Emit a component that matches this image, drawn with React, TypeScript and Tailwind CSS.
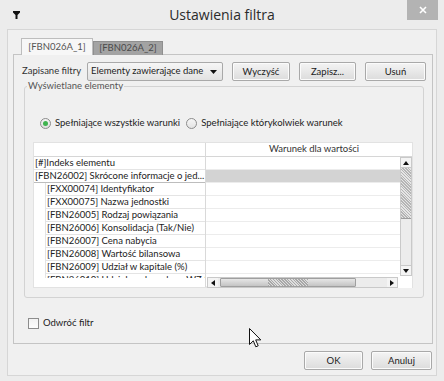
import React from "react";

const rows = [
  { t: "[#]Indeks elementu", i: 0 },
  { t: "[FBN26002] Skrócone informacje o jed...", i: 0, sel: true },
  { t: "[FXX00074] Identyfikator", i: 1 },
  { t: "[FXX00075] Nazwa jednostki", i: 1 },
  { t: "[FBN26005] Rodzaj powiązania", i: 1 },
  { t: "[FBN26006] Konsolidacja (Tak/Nie)", i: 1 },
  { t: "[FBN26007] Cena nabycia", i: 1 },
  { t: "[FBN26008] Wartość bilansowa", i: 1 },
  { t: "[FBN26009] Udział w kapitale (%)", i: 1 },
  { t: "[FBN26010] Udział w głosach na WZ (%)", i: 1 },
];

function Btn({ label, w }: { label: string; w: string }) {
  return (
    <button
      className={`${w} h-[19px] rounded-[2px] border border-[#a9a9a9] bg-gradient-to-b from-[#f4f4f4] to-[#dcdcdc] text-[#222] leading-[17px] shadow-[inset_0_0_0_1px_#fbfbfb]`}
    >
      {label}
    </button>
  );
}

function Arrow({ dir }: { dir: "up" | "down" | "left" | "right" }) {
  const pts = {
    up: "1,5 4,1 7,5",
    down: "1,1 4,5 7,1",
    left: "5,1 1,4 5,7",
    right: "1,1 5,4 1,7",
  }[dir];
  const vert = dir === "up" || dir === "down";
  return (
    <svg className={vert ? "w-[8px] h-[6px]" : "w-[6px] h-[8px]"} viewBox={vert ? "0 0 8 6" : "0 0 6 8"}>
      <polygon points={pts} fill="#111" />
    </svg>
  );
}

export default function App() {
  return (
    <div className="relative w-[444px] h-[381px] overflow-hidden bg-[#ececec] text-[9.5px] text-[#222] font-['Lato',sans-serif]">
      {/* pasek tytułu */}
      <div className="grid grid-cols-[1fr_auto_1fr] h-[29px]">
        <div className="flex items-center pl-[13px]">
          <svg className="w-[7px] h-[8px]" viewBox="0 0 7 8">
            <polygon points="0,0 7,0 7,1.5 4.5,4 4.5,8 2.5,8 2.5,4 0,1.5" fill="#111" />
          </svg>
        </div>
        <div className="flex items-center text-[14px] text-[#2b2b2b] pb-[1px] font-['Open_Sans',sans-serif]">
          Ustawienia filtra
        </div>
        <div className="flex justify-end items-start pr-[6px]">
          <div className="w-[31px] h-[20px] bg-[#b3b3b3] flex items-center justify-center">
            <svg className="w-[8px] h-[8px]" viewBox="0 0 8 8">
              <path d="M1 1 L7 7 M7 1 L1 7" stroke="#fff" strokeWidth="1.6" />
            </svg>
          </div>
        </div>
      </div>

      {/* ramka okna */}
      <div className="mx-[7px] h-[347px] border border-[#d6d6d6] bg-[#f0f0f0] pl-[5px] pt-[8px]">
        {/* zakładki */}
        <div className="flex items-end h-[17px] pl-[8px]">
          <div className="relative z-10 w-[72px] h-[17px] border border-b-0 border-[#bdbdbd] bg-[#f7f7f7] flex items-center justify-center text-[#555]">
            [FBN026A_1]
          </div>
          <div className="w-[70px] h-[14px] border border-b-0 border-[#8f8f8f] bg-[#a3a3a3] flex items-center justify-center text-[#4a4a4a]">
            [FBN026A_2]
          </div>
        </div>

        {/* panel zakładki */}
        <div className="-mt-[1px] w-[420px] h-[290px] border border-[#c4c4c4] bg-[#f0f0f0]">
          <div className="flex items-center h-[19px] mt-[7px] pl-[8px]">
            <span className="w-[60px] text-[#333] whitespace-nowrap">Zapisane filtry</span>
            <div className="ml-[5px] w-[136px] h-[19px] rounded-[2px] border border-[#a9a9a9] bg-gradient-to-b from-[#f6f6f6] to-[#e2e2e2] flex items-center pl-[3px] pr-[5px]">
              <span className="flex-1 whitespace-nowrap">Elementy zawierające dane</span>
              <svg className="w-[7px] h-[4px]" viewBox="0 0 7 4">
                <polygon points="0,0 7,0 3.5,4" fill="#111" />
              </svg>
            </div>
            <div className="ml-[9px] flex gap-[9px]">
              <Btn label="Wyczyść" w="w-[58px]" />
              <Btn label="Zapisz..." w="w-[57px]" />
              <Btn label="Usuń" w="w-[61px]" />
            </div>
          </div>

          {/* Wyświetlane elementy */}
          <fieldset className="ml-[10px] mt-[-1px] w-[400px] h-[218px] border border-[#d3d3d3] rounded-[3px] px-[0px]">
            <legend className="ml-[2px] px-[1px] leading-[12px] text-[#555]">Wyświetlane elementy</legend>

            <div className="flex items-center h-[12px] mt-[25px] pl-[15px]">
              <div className="w-[11px] h-[11px] rounded-full border border-[#8c8c8c] bg-gradient-to-b from-[#f4f4f4] to-[#dedede] flex items-center justify-center">
                <div className="w-[5px] h-[5px] rounded-full bg-[#3fb34f]" />
              </div>
              <span className="ml-[4px]">Spełniające wszystkie warunki</span>
              <div className="ml-[6px] w-[11px] h-[11px] rounded-full border border-[#8c8c8c] bg-gradient-to-b from-[#f6f6f6] to-[#e4e4e4]" />
              <span className="ml-[4px]">Spełniające którykolwiek warunek</span>
            </div>

            {/* tabela */}
            <div className="ml-[8px] mt-[13px] w-[380px] h-[146px] bg-white flex border border-[#e2e2e2]">
              <div className="w-[172px] border-r border-[#d9d9d9] flex flex-col">
                <div className="h-[14px] border-b border-[#d6d6d6]" />
                <div className="h-[121px] overflow-hidden">
                  {rows.map((r, k) => (
                    <div
                      key={k}
                      className={`h-[13px] leading-[12px] border-b border-[#e4e4e4] whitespace-nowrap overflow-hidden ${
                        r.i ? "ml-[11px] border-l border-[#d2d2d2] pl-[1px]" : "pl-[1px]"
                      } ${r.sel ? "border-b-[#bdbdbd]" : ""}`}
                    >
                      {r.t}
                    </div>
                  ))}
                </div>
              </div>
              <div className="flex-1 flex flex-col">
                <div className="h-[14px] border-b border-[#d6d6d6] flex items-center justify-center pl-[10px] text-[#333]">
                  Warunek dla wartości
                </div>
                <div className="flex h-[119px]">
                  <div className="flex-1">
                    {rows.map((r, k) => (
                      <div key={k} className={`h-[13px] border-b border-[#ececec] ${r.sel ? "bg-[#d3d3d3]" : ""}`} />
                    ))}
                  </div>
                  <div className="w-[12px] flex flex-col border border-[#c9c9c9] bg-[#ededed]">
                    <div className="h-[10px] flex items-center justify-center bg-[#f4f4f4] border-b border-[#c9c9c9]">
                      <Arrow dir="up" />
                    </div>
                    <div className="h-[51px] border-b border-[#9d9d9d] bg-[repeating-linear-gradient(45deg,#b5b5b5_0px,#b5b5b5_1px,#e6e6e6_1px,#e6e6e6_2px)]" />
                    <div className="flex-1 bg-[#ececec]" />
                    <div className="h-[10px] flex items-center justify-center bg-[#f4f4f4] border-t border-[#c9c9c9]">
                      <Arrow dir="down" />
                    </div>
                  </div>
                </div>
                <div className="flex h-[11px] mt-[1px]">
                  <div className="flex-1 flex items-stretch border border-[#c9c9c9] bg-[#ececec] ml-[1px]">
                    <div className="w-[10px] flex items-center justify-center bg-[#f4f4f4]">
                      <Arrow dir="left" />
                    </div>
                    <div className="ml-[2px] w-[136px] rounded-[1px] border border-[#9f9f9f] bg-gradient-to-b from-[#e6e6e6] to-[#c4c4c4] flex items-center justify-center">
                      <div className="w-[40px] h-[7px] bg-[repeating-linear-gradient(45deg,#a8a8a8_0px,#a8a8a8_1px,#dedede_1px,#dedede_2px)]" />
                    </div>
                    <div className="flex-1" />
                    <div className="w-[10px] flex items-center justify-center bg-[#f4f4f4]">
                      <Arrow dir="right" />
                    </div>
                  </div>
                  <div className="w-[14px] bg-white" />
                </div>
              </div>
            </div>
          </fieldset>

          <div className="flex items-center mt-[18px] pl-[14px]">
            <div className="w-[11px] h-[11px] border border-[#8c8c8c] bg-gradient-to-b from-[#f2f2f2] to-[#fdfdfd]" />
            <span className="ml-[4px]">Odwróć filtr</span>
          </div>
        </div>

        <div className="flex justify-end gap-[8px] pr-[4px] mt-[7px]">
          <Btn label="OK" w="w-[59px]" />
          <Btn label="Anuluj" w="w-[61px]" />
        </div>
      </div>

      {/* kursor */}
      <svg className="absolute left-[249px] top-[328px] w-[13px] h-[20px]" viewBox="0 0 13 20">
        <path d="M0.5 0.5 L0.5 16.5 L4.3 12.8 L6.8 18.8 L9.2 17.8 L6.7 11.9 L11.8 11.9 Z" fill="#fff" stroke="#111" strokeWidth="1" strokeLinejoin="round" />
      </svg>
    </div>
  );
}
